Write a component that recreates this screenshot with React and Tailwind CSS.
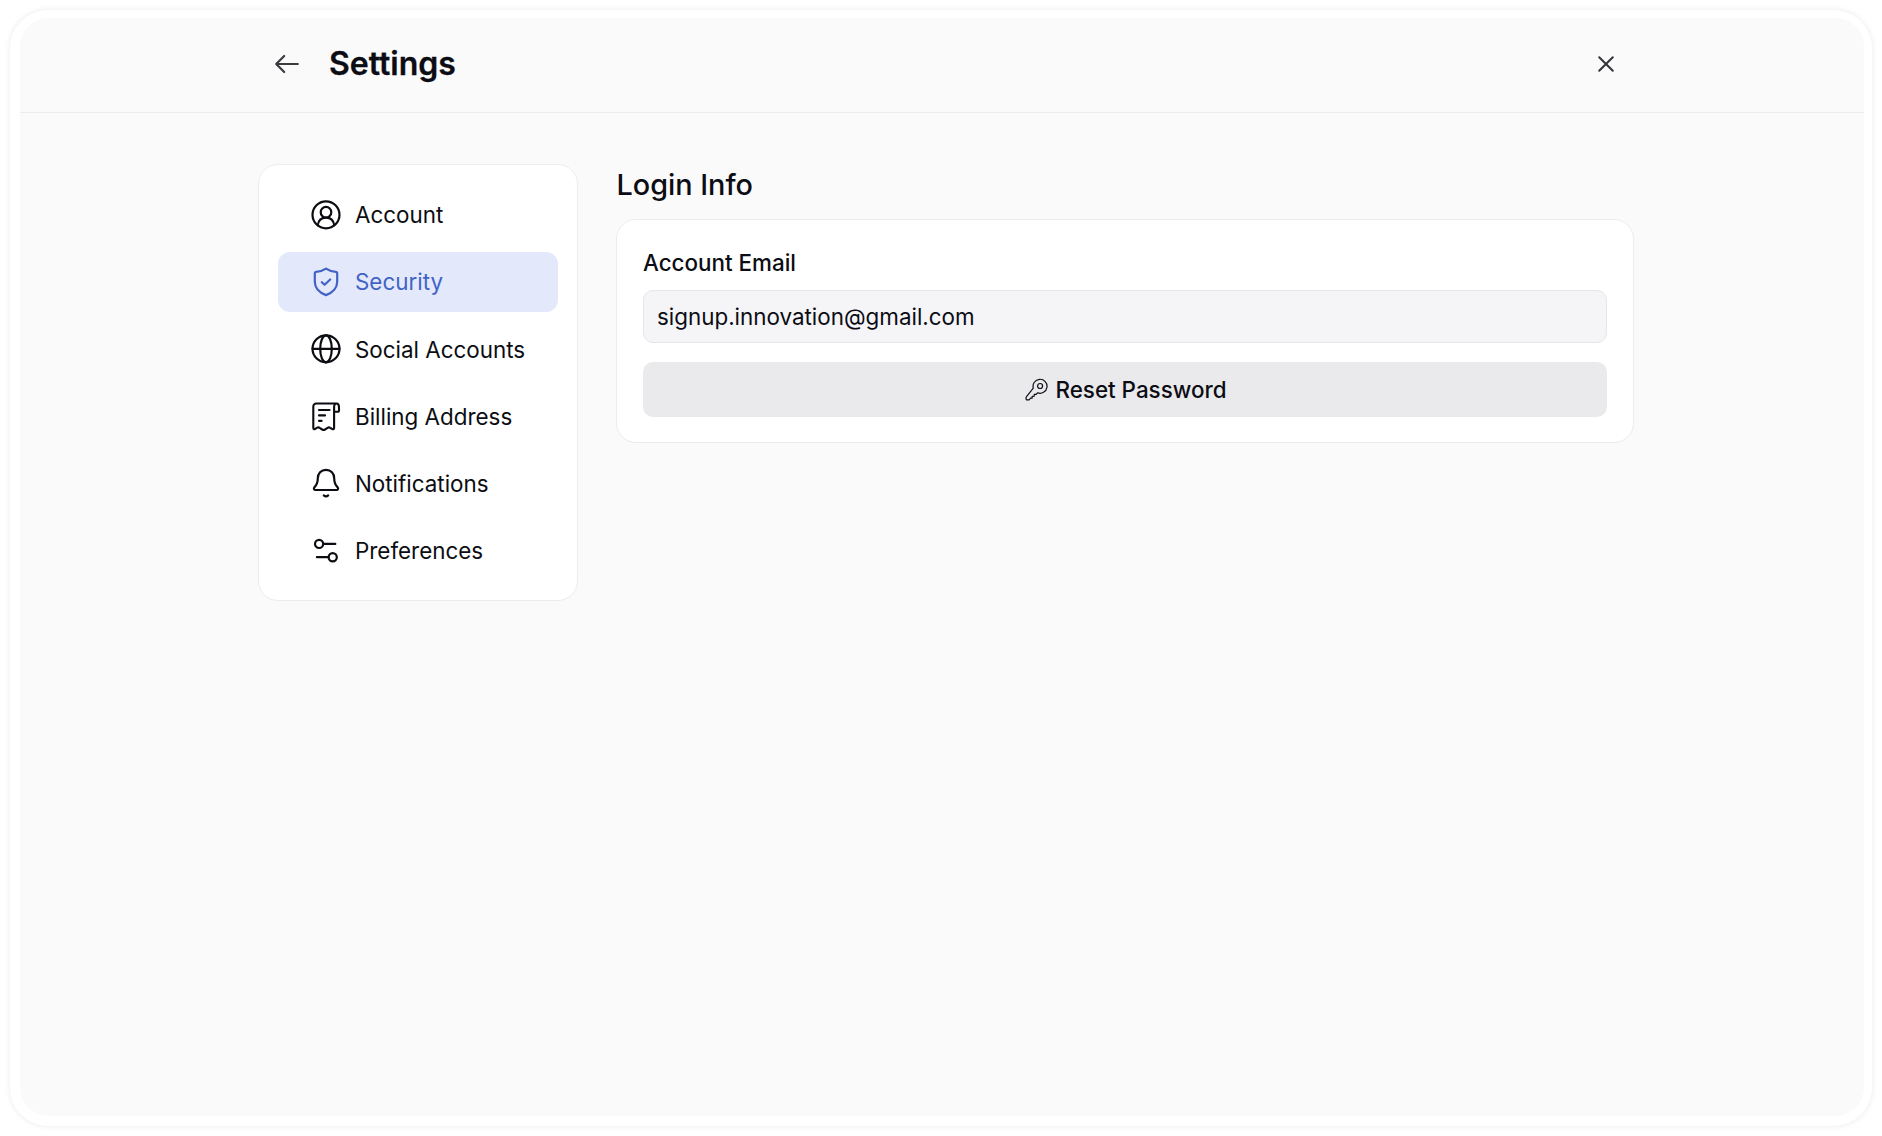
const stroke = {
  fill: "none",
  stroke: "currentColor",
  strokeWidth: 2.2,
  strokeLinecap: "round",
  strokeLinejoin: "round",
};

function Icon({ children }) {
  return (
    <svg viewBox="0 0 32 32" className="size-8 shrink-0" {...stroke}>
      {children}
    </svg>
  );
}

const items = [
  {
    label: "Account",
    icon: (
      <Icon>
        <circle cx="16" cy="15.8" r="13.5" />
        <circle cx="16" cy="13.2" r="5.3" />
        <path d="M7.8 26.4C8.3 21.6 11.4 18.6 16 18.6s7.7 3 8.2 7.8" />
      </Icon>
    ),
  },
  {
    label: "Security",
    active: true,
    icon: (
      <Icon>
        <path d="M16 2.6c-3 2-6.4 3.1-9.9 3.2-.9.1-1.3.6-1.3 1.3v8.4c0 6.6 4.2 11 11.2 13.6 7-2.6 11.2-7 11.2-13.6V7.1c0-.7-.4-1.2-1.3-1.3C22.4 5.7 19 4.6 16 2.6Z" />
        <path d="m11.8 16.2 2.8 2.6 5.6-5.3" />
      </Icon>
    ),
  },
  {
    label: "Social Accounts",
    icon: (
      <Icon>
        <circle cx="16" cy="15.8" r="13.5" />
        <ellipse cx="16" cy="15.8" rx="5.8" ry="13.5" />
        <path d="M2.5 15.8h27" />
      </Icon>
    ),
  },
  {
    label: "Billing Address",
    icon: (
      <Icon>
        <path
          d="M26.6 2.5H6.4C4.4 2.5 3.3 3.7 3.3 5.7v21c0 1.5.8 1.9 2 1.1l1.8-1.1c.9-.6 1.7-.5 2.5.1l2.6 1.7c1 .6 1.8.6 2.8 0l2.600-1.700c.9-.6 1.700-.6 2.600 0l1.800 1.100c1.300.8 2.100.3 2.100-1.100V6c0-2 .9-3.500 2.500-3.500 1.500 0 2.400 1.600 2.400 4v2.700c0 1.100-.5 1.600-1.500 1.600h-3.400"
          strokeWidth="2.1"
        />
        <path d="M9 9h10.500M9 14.400h6M9 19.800h2.600" />
      </Icon>
    ),
  },
  {
    label: "Notifications",
    icon: (
      <Icon>
        <path d="M16 1.800c-5 0-8.200 3.700-8.200 8.500 0 5-1.500 7-3.300 8.800-1.200 1.400-.5 2.900 1.100 2.900h20.800c1.600 0 2.300-1.500 1.100-2.900-1.800-1.800-3.300-3.800-3.300-8.800 0-4.800-3.200-8.500-8.200-8.500Z" />
        <path d="M13.800 27.400c1.200 1.100 3.200 1.100 4.400 0" />
      </Icon>
    ),
  },
  {
    label: "Preferences",
    icon: (
      <Icon>
        <circle cx="9.1" cy="8.900" r="4.100" />
        <path d="M13.200 8.900h12.100M6.900 22.200h11.700" />
        <circle cx="22.700" cy="22.200" r="4.100" />
      </Icon>
    ),
  },
];

function Sidebar() {
  return (
    <nav className="flex h-[437px] w-[320px] flex-col gap-[7.2px] rounded-[20px] border border-[#ececee] bg-white px-[19px] pt-5">
      {items.map(({ label, icon, active }) => (
        <a
          key={label}
          className={`flex h-[60px] shrink-0 items-center gap-[13px] rounded-xl pl-8 text-[22.4px] ${
            active ? "bg-[#e3e9fb] text-[#4263c5]" : "text-[#0c0d12]"
          }`}
        >
          {icon}
          {label}
        </a>
      ))}
    </nav>
  );
}

function LoginInfo() {
  return (
    <section className="w-[1018px]">
      <h2 className="flex h-[42px] items-center pl-[0.5px] text-[28.8px] font-medium">Login Info</h2>
      <div className="mt-[13px] flex h-[224px] flex-col rounded-[20px] border border-[#ececee] bg-white px-[26px] pt-[25px]">
        <label className="flex h-9 items-center text-[22.4px] font-medium">Account Email</label>
        <div className="mt-[9px] flex h-[53px] items-center rounded-[10px] border border-[#e6e6ea] bg-[#f5f5f8] px-[13px] text-[22.4px]">
          signup.innovation@gmail.com
        </div>
        <button className="mt-[19px] flex h-[55px] items-center justify-center gap-[7px] rounded-[10px] bg-[#eaeaec] pl-px text-[22.4px] font-medium">
          <svg viewBox="0 0 24 24" className="size-6" {...stroke} strokeWidth="1.2">
            <path d="M9.3 10.2a7 7 0 1 1 4.2 4.6l-1.3 1.5-1.9.1-.1 1.8-2 .1-.1 1.8-1.5.1-1.5 1.6-2.7.1c-.6-1.5-.5-2.7.3-3.600Z" />
            <circle cx="16.1" cy="8" r="2.5" />
          </svg>
          Reset Password
        </button>
      </div>
    </section>
  );
}

export default function App() {
  return (
    <div className="h-[1136px] w-[1882px] overflow-hidden bg-white px-[10px] pt-[10px] font-['Inter',sans-serif] text-[#0c0d14]">
      <div className="h-[1116px] w-[1862px] rounded-[38px] bg-white px-[10px] pt-2 pr-2 shadow-[0_0_4px_2px_#f4f4f4]">
        <div className="h-[1098px] w-[1844px] overflow-hidden rounded-[28px] bg-[#fafafa]">
          <header className="flex h-[95px] items-center border-b border-[#ededed] pr-[246.5px] pb-0.5 pl-[253px]">
            <svg viewBox="0 0 28 28" className="size-7 text-[#3a3a40]" {...stroke}>
              <path d="M24.8 14H3.2M11.2 6l-8 8 8 8" />
            </svg>
            <h1 className="ml-[28px] text-[32px] font-semibold [-webkit-text-stroke:0.3px]">Settings</h1>
            <svg viewBox="0 0 24 24" className="ml-auto size-6 text-[#333338]" {...stroke} strokeWidth="2">
              <path d="m5.2 5.200 13.600 13.600M18.800 5.200 5.200 18.800" />
            </svg>
          </header>
          <main className="flex gap-[38px] pt-[51px] pl-[238px]">
            <Sidebar />
            <LoginInfo />
          </main>
        </div>
      </div>
    </div>
  );
}
